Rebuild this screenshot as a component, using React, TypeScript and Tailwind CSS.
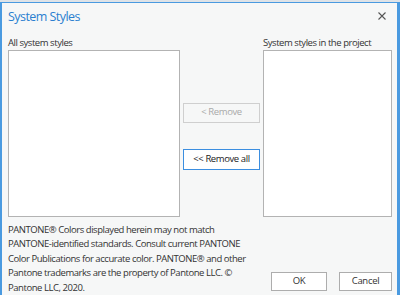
export default function App() {
  return (
    <div
      className="w-[400px] h-[295px] overflow-hidden bg-[#dfe3e7] pt-[2px]"
      style={{ fontFamily: '"Open Sans", "Noto Sans", sans-serif' }}
    >
      <div className="h-[293px] bg-[#f6f7f7] border-t border-l-2 border-r-[3px] border-[#4a9ae0] flex flex-col">
        <div className="flex items-center justify-between pl-[6px] pr-[11px] h-[30px]">
          <span className="text-[12.5px] tracking-[-0.55px] text-[#2a7fd0] leading-5 pt-[1px]">System Styles</span>
          <svg width="8" height="8" viewBox="0 0 8 8" className="text-[#555]">
            <path d="M0.5 0.5 L7.5 7.5 M7.5 0.5 L0.5 7.5" stroke="currentColor" strokeWidth="1.1" />
          </svg>
        </div>

        <div className="flex pl-[6px] gap-[3px] mt-[6px]">
          <div className="w-[172px] flex flex-col">
            <span className="text-[9.5px] tracking-[-0.45px] leading-[13px] text-[#333] mb-[1px]">
              All system styles
            </span>
            <div className="h-[167px] bg-white border border-[#b3b3b3]" />
          </div>
          <div className="w-[77px] flex flex-col pt-[67px] gap-[26px]">
            <button className="h-[20px] bg-[#f6f7f7] border border-[#cfcfcf] text-[9.5px] tracking-[-0.4px] text-[#a9a9a9]">
              &lt; Remove
            </button>
            <button className="h-[21px] bg-white border border-[#3b8ee0] text-[9.5px] tracking-[-0.4px] text-[#222]">
              &lt;&lt; Remove all
            </button>
          </div>
          <div className="w-[129px] flex flex-col">
            <span className="text-[9.5px] tracking-[-0.45px] leading-[13px] text-[#333] mb-[1px] whitespace-nowrap">
              System styles in the project
            </span>
            <div className="h-[167px] bg-white border border-[#b3b3b3]" />
          </div>
        </div>

        <div className="flex pl-[6px] pr-[5px] mt-[6px]">
          <p className="text-[9.5px] tracking-[-0.45px] leading-[14.5px] text-[#333] flex-1 whitespace-nowrap">
            PANTONE® Colors displayed herein may not match
            <br />
            PANTONE-identified standards. Consult current PANTONE
            <br />
            Color Publications for accurate color. PANTONE® and other
            <br />
            Pantone trademarks are the property of Pantone LLC. ©
            <br />
            Pantone LLC, 2020.
          </p>
          <div className="flex items-end gap-[12px] pb-[4px]">
            <button className="w-[56px] h-[19px] bg-white border border-[#adadad] text-[9.5px] tracking-[-0.3px] text-[#333]">
              OK
            </button>
            <button className="w-[53px] h-[19px] bg-white border border-[#adadad] text-[9.5px] tracking-[-0.3px] text-[#333]">
              Cancel
            </button>
          </div>
        </div>
      </div>
    </div>
  );
}
